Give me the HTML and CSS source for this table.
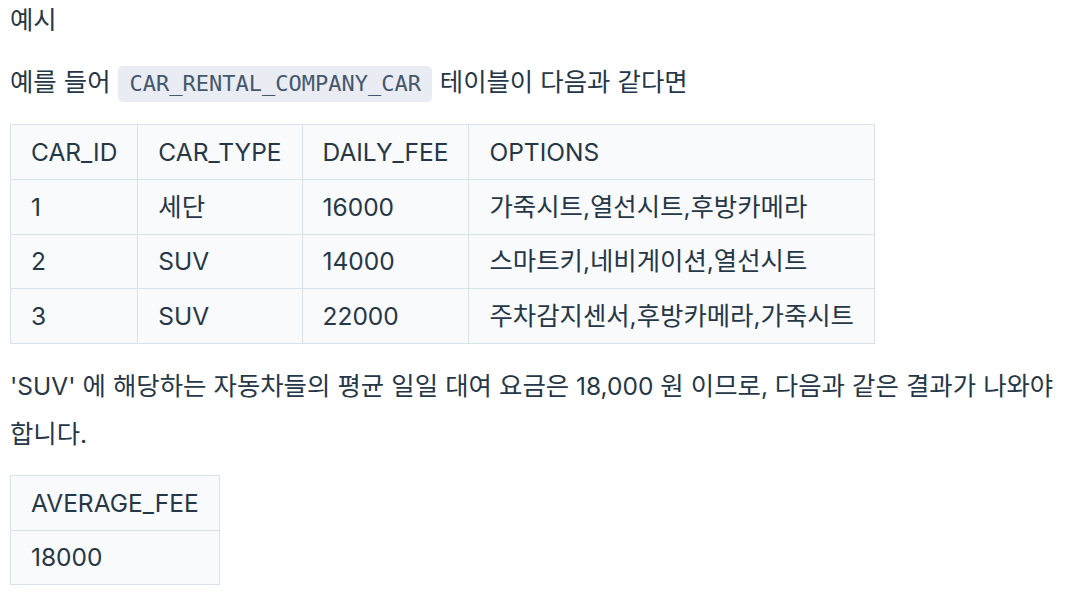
FILE: index.html
```html
<!DOCTYPE html>
<html lang="ko">
<head>
<meta charset="utf-8">
<link rel="stylesheet" href="styles.css">
</head>
<body>
<div class="doc">
  <p class="title"><span class="ko">예시</span></p>
  <p class="para para-intro"><span class="ko">예를 들어</span> <code class="code">CAR_RENTAL_COMPANY_CAR</code> <span class="ko">테이블이 다음과 같다면</span></p>
  <table class="tbl">
    <tr><th>CAR_ID</th><th>CAR_TYPE</th><th>DAILY_FEE</th><th>OPTIONS</th></tr>
    <tr><td>1</td><td><span class="ko">세단</span></td><td>16000</td><td><span class="ko">가죽시트</span>,<span class="ko">열선시트</span>,<span class="ko">후방카메라</span></td></tr>
    <tr><td>2</td><td>SUV</td><td>14000</td><td><span class="ko">스마트키</span>,<span class="ko">네비게이션</span>,<span class="ko">열선시트</span></td></tr>
    <tr><td>3</td><td>SUV</td><td>22000</td><td><span class="ko">주차감지센서</span>,<span class="ko">후방카메라</span>,<span class="ko">가죽시트</span></td></tr>
  </table>
  <p class="para">'SUV' <span class="ko">에 해당하는 자동차들의 평균 일일 대여 요금은</span> 18,000 <span class="ko">원 이므로</span>, <span class="ko">다음과 같은 결과가 나와야 합니다</span>.</p>
  <table class="tbl tbl-result">
    <tr><th>AVERAGE_FEE</th></tr>
    <tr><td>18000</td></tr>
  </table>
</div>
</body>
</html>
```
FILE: styles.css
```css
html, body {
  margin: 0;
  padding: 0;
  background: #ffffff;
}
.doc {
  padding: 0 10px;
  font-family: Inter, "Noto Sans CJK KR", sans-serif;
  font-size: 24.5px;
  color: #263747;
  line-height: 48px;
  word-break: keep-all;
}
.ko {
  font-size: 25.4px;
}
.title {
  margin: -4px 0 0 0;
}
.para {
  margin: 14px 0 17px 0;
}
.para-intro {
  margin-bottom: 18px;
}
.code {
  font-family: "DejaVu Sans Mono", monospace;
  font-size: 22px;
  line-height: 1;
  color: #44576c;
  background: #e9ecf3;
  border-radius: 5px;
  padding: 5px 11px 6px 11px;
  margin: 0 1px;
}
.tbl {
  border-collapse: collapse;
  background: #f9fafc;
  margin: 0 0 18px 0;
}
.tbl th, .tbl td {
  border: 1px solid #d7e2eb;
  padding: 0 20px;
  height: 53.75px;
  line-height: 24px;
  font-weight: 400;
  text-align: left;
  white-space: nowrap;
}
.tbl-result th, .tbl-result td {
  height: 53.5px;
}
```
